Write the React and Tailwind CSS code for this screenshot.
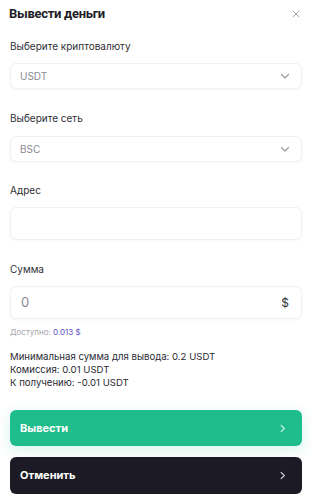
import React, { useState } from "react";

const font = { fontFamily: "Inter, 'Noto Sans', sans-serif" };

const Chevron = ({ dir = "down", className = "" }) => (
  <svg
    viewBox="0 0 12 12"
    className={className}
    fill="none"
    stroke="currentColor"
    strokeWidth="1.2"
    strokeLinecap="round"
    strokeLinejoin="round"
  >
    {dir === "down" ? <path d="M2.5 4.5 6 8l3.5-3.5" /> : <path d="M4.5 2.5 8 6l-3.5 3.5" />}
  </svg>
);

const Label = ({ children, className = "" }) => (
  <div className={`text-[10px] leading-[14px] text-[#2f2f36] ${className}`}>{children}</div>
);

const Select = ({ value, className = "" }) => (
  <div
    className={`h-[26px] rounded-[6px] border border-[#f1f1f3] bg-white shadow-[0_1px_3px_rgba(0,0,0,0.04)] flex items-center justify-between pl-[9px] pr-[10px] ${className}`}
  >
    <span className="text-[10px] text-[#8a8a92]">{value}</span>
    <Chevron className="w-[12px] h-[12px] text-[#9a9aa2]" />
  </div>
);

export default function App() {
  const [amount] = useState("0");

  return (
    <div style={font} className="w-[312px] h-[500px] bg-white px-[10px] flex flex-col overflow-hidden">
      {/* Header */}
      <div className="pt-[4px] flex items-center justify-between -ml-[1px]">
        <h1 className="font-['Roboto',sans-serif] text-[13px] tracking-[-0.3px] leading-[20px] font-bold text-[#1e1e26]">
          Вывести деньги
        </h1>
        <svg viewBox="0 0 10 10" className="w-[8px] h-[8px] mr-[2px] text-[#8e8e96]" stroke="currentColor" strokeWidth="1">
          <path d="M1 1l8 8M9 1 1 9" />
        </svg>
      </div>

      <Label className="mt-[15px]">Выберите криптовалюту</Label>
      <Select value="USDT" className="mt-[10px]" />

      <Label className="mt-[22px]">Выберите сеть</Label>
      <Select value="BSC" className="mt-[11px]" />

      <Label className="mt-[21px]">Адрес</Label>
      <div className="mt-[10px] h-[33px] rounded-[6px] border border-[#f1f1f3] bg-white shadow-[0_1px_3px_rgba(0,0,0,0.04)]" />

      <Label className="mt-[22px]">Сумма</Label>
      <div className="mt-[10px] h-[33px] rounded-[6px] border border-[#f1f1f3] bg-white shadow-[0_1px_3px_rgba(0,0,0,0.04)] flex items-center justify-between pl-[10px] pr-[12px]">
        <span className="text-[13px] text-[#8a8a92]">{amount}</span>
        <span className="text-[12px] text-[#2f2f36]">$</span>
      </div>

      <div className="mt-[7px] text-[8px] leading-[12px] text-[#a4a4ac]">
        Доступно: <span className="text-[#5b4fc4]">0.013 $</span>
      </div>

      <div className="mt-[12px] text-[9.6px] leading-[13px] text-[#2a2a32]">
        <div>Минимальная сумма для вывода: 0.2 USDT</div>
        <div>Комиссия: 0.01 USDT</div>
        <div>К получению: -0.01 USDT</div>
      </div>

      <button className="mt-[21px] h-[36px] rounded-[6px] bg-[#1ebd8b] shadow-[0_4px_14px_rgba(30,189,139,0.18)] flex items-center justify-between pl-[10px] pr-[14px] text-white">
        <span className="text-[11px] font-bold">Вывести</span>
        <Chevron dir="right" className="w-[11px] h-[11px] text-white/80" />
      </button>

      <button className="mt-[11px] h-[37px] rounded-[6px] bg-[#1c1b25] flex items-center justify-between pl-[10px] pr-[14px] text-white">
        <span className="text-[11px] font-bold">Отменить</span>
        <Chevron dir="right" className="w-[11px] h-[11px] text-white/80" />
      </button>
    </div>
  );
}
